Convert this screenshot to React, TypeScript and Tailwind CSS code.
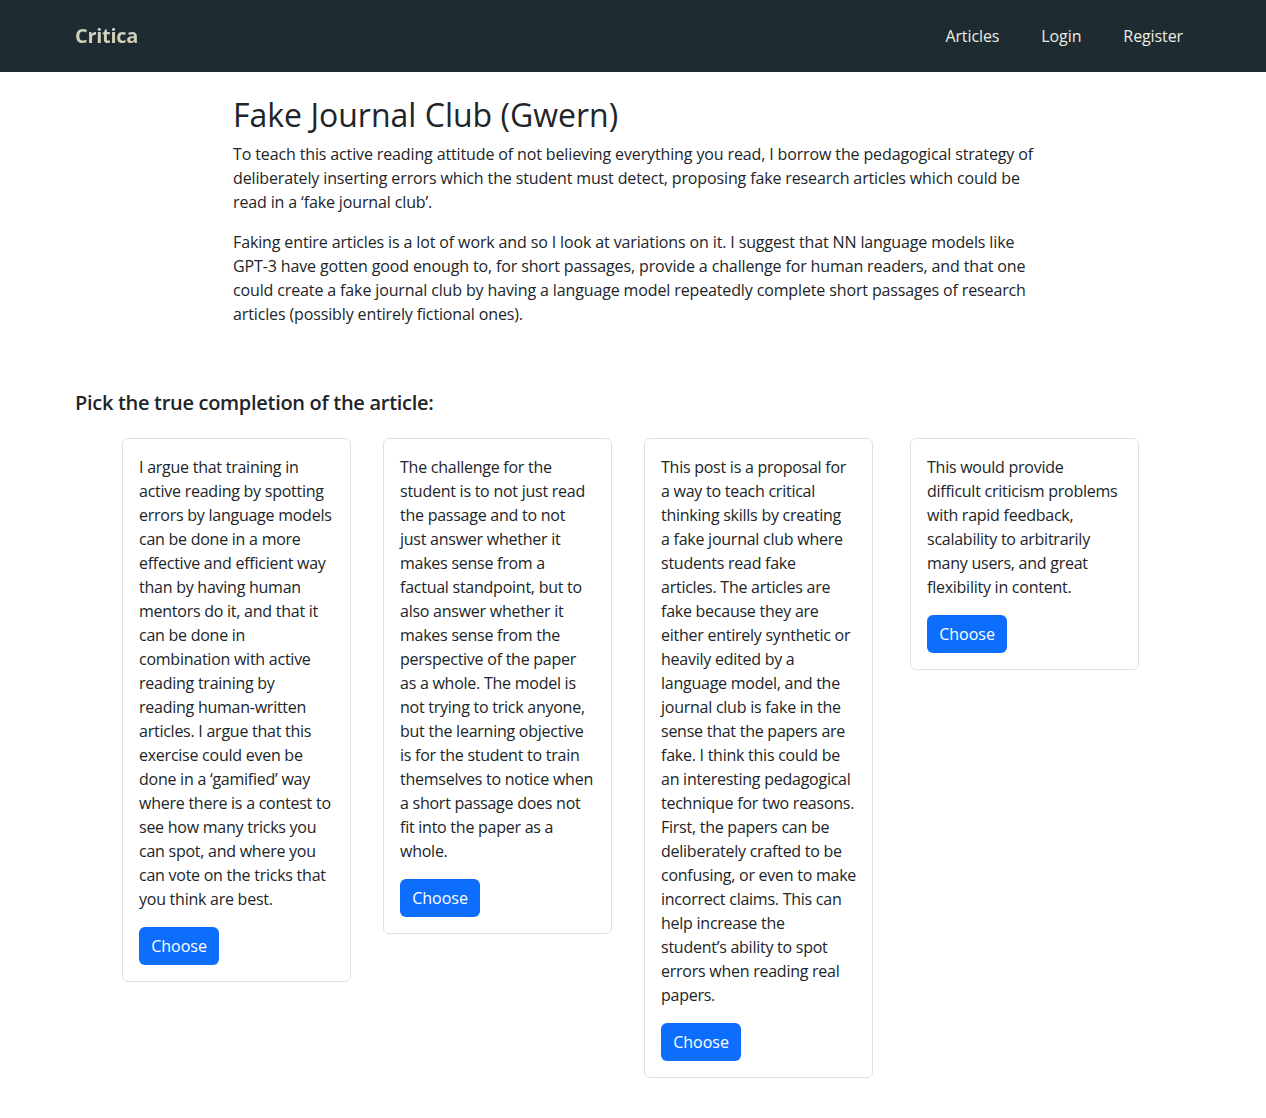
const intro1 = [
  'To teach this active reading attitude of not believing everything you read, I borrow the pedagogical strategy of',
  'deliberately inserting errors which the student must detect, proposing fake research articles which could be',
  'read in a ‘fake journal club’.',
];

const intro2 = [
  'Faking entire articles is a lot of work and so I look at variations on it. I suggest that NN language models like',
  'GPT-3 have gotten good enough to, for short passages, provide a challenge for human readers, and that one',
  'could create a fake journal club by having a language model repeatedly complete short passages of research',
  'articles (possibly entirely fictional ones).',
];

const completions = [
  [
    'I argue that training in',
    'active reading by spotting',
    'errors by language models',
    'can be done in a more',
    'effective and efficient way',
    'than by having human',
    'mentors do it, and that it',
    'can be done in',
    'combination with active',
    'reading training by',
    'reading human-written',
    'articles. I argue that this',
    'exercise could even be',
    'done in a ‘gamified’ way',
    'where there is a contest to',
    'see how many tricks you',
    'can spot, and where you',
    'can vote on the tricks that',
    'you think are best.',
  ],
  [
    'The challenge for the',
    'student is to not just read',
    'the passage and to not',
    'just answer whether it',
    'makes sense from a',
    'factual standpoint, but to',
    'also answer whether it',
    'makes sense from the',
    'perspective of the paper',
    'as a whole. The model is',
    'not trying to trick anyone,',
    'but the learning objective',
    'is for the student to train',
    'themselves to notice when',
    'a short passage does not',
    'fit into the paper as a',
    'whole.',
  ],
  [
    'This post is a proposal for',
    'a way to teach critical',
    'thinking skills by creating',
    'a fake journal club where',
    'students read fake',
    'articles. The articles are',
    'fake because they are',
    'either entirely synthetic or',
    'heavily edited by a',
    'language model, and the',
    'journal club is fake in the',
    'sense that the papers are',
    'fake. I think this could be',
    'an interesting pedagogical',
    'technique for two reasons.',
    'First, the papers can be',
    'deliberately crafted to be',
    'confusing, or even to make',
    'incorrect claims. This can',
    'help increase the',
    'student’s ability to spot',
    'errors when reading real',
    'papers.',
  ],
  [
    'This would provide',
    'difficult criticism problems',
    'with rapid feedback,',
    'scalability to arbitrarily',
    'many users, and great',
    'flexibility in content.',
  ],
];

const Lines = ({ lines }: { lines: string[] }) => (
  <>
    {lines.map((l, i) => (
      <span key={i} className="block whitespace-nowrap">
        {l}
      </span>
    ))}
  </>
);

export default function App() {
  return (
    <div
      className="min-h-screen bg-white text-[#212529] text-base leading-6"
      style={{ fontFamily: '"Open Sans", "Noto Sans", sans-serif' }}
    >
      <nav className="bg-[#1e2b30] h-[72px]">
        <div className="mx-auto w-[1116px] h-full flex items-center justify-between">
          <a className="text-xl font-bold text-transparent bg-clip-text bg-gradient-to-b from-[#c4d3d0] to-[#ddd0aa] tracking-[-0.3px]">
            Critica
          </a>
          <ul className="flex items-center gap-[42px] pr-2 text-[#ecebe3] tracking-[-0.1px]">
            <li>Articles</li>
            <li>Login</li>
            <li>Register</li>
          </ul>
        </div>
      </nav>

      <main className="mx-auto w-[1116px]">
        <section className="mx-auto w-[800px] pt-6 tracking-[-0.13px]">
          <h1 className="text-[32px] leading-[38px] font-medium mb-2 tracking-normal">
            Fake Journal Club (Gwern)
          </h1>
          <p className="mb-4">
            <Lines lines={intro1} />
          </p>
          <p>
            <Lines lines={intro2} />
          </p>
        </section>

        <h2 className="mt-[65px] text-xl leading-6 font-semibold tracking-[-0.3px]">
          Pick the true completion of the article:
        </h2>

        <div className="mt-[23px] pl-[47px] flex items-start gap-[32px] pb-10">
          {completions.map((c, i) => (
            <div
              key={i}
              className={`w-[229px] border border-[#dee2e6] rounded-md p-4 tracking-[-0.25px] ${i === 3 ? 'ml-[5px]' : ''}`}
            >
              <p className="mb-4">
                <Lines lines={c} />
              </p>
              <button className="bg-[#0d6efd] text-white rounded-md w-20 h-[38px] tracking-normal">
                Choose
              </button>
            </div>
          ))}
        </div>
      </main>
    </div>
  );
}
